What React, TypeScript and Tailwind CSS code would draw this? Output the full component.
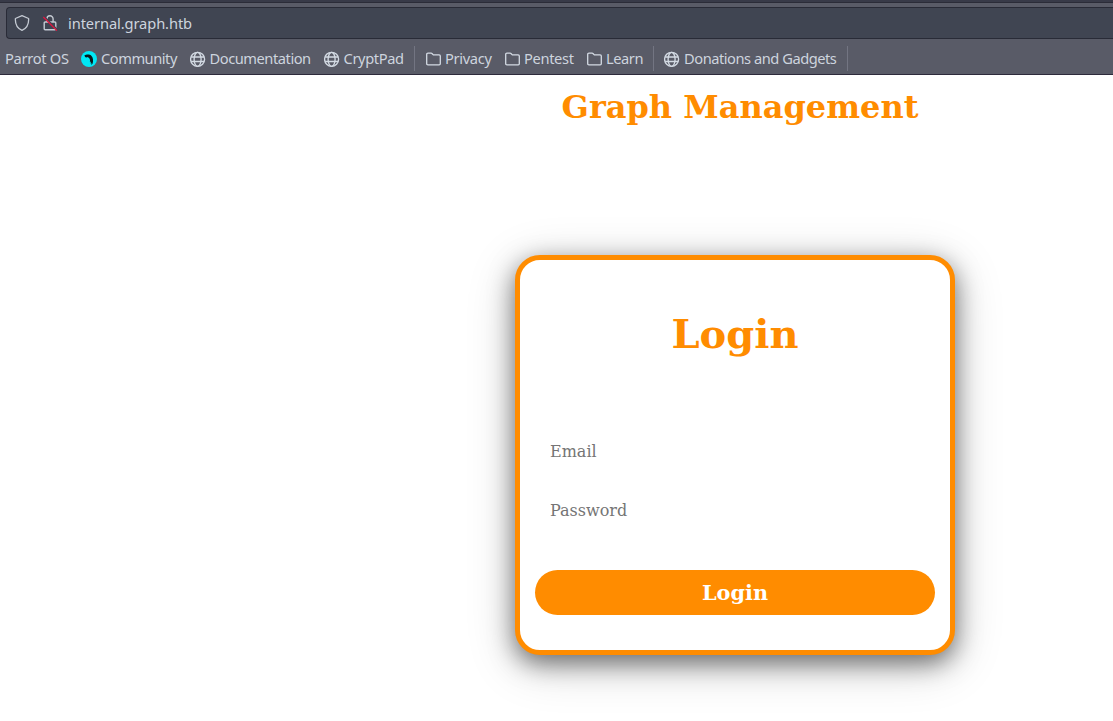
import type { ReactNode } from 'react';

function Globe() {
  return (
    <svg className="size-4 shrink-0" viewBox="0 0 16 16" fill="none" stroke="#d3dae3" strokeWidth="1.35">
      <circle cx="7.6" cy="8.3" r="7" />
      <ellipse cx="7.6" cy="8.3" rx="3.5" ry="7" />
      <path d="M1.1 6h13M1.1 10.5h13" />
    </svg>
  );
}

function Folder() {
  return (
    <svg className="size-4 shrink-0" viewBox="0 0 16 16" fill="none" stroke="#d3dae3" strokeWidth="1.3" strokeLinejoin="round">
      <path d="M2.9 2.2h3.2c.5 0 .8.2 1.1.5l1.1 1.2h5.9c.7 0 1.1.5 1.1 1.1v7.8c0 .7-.4 1.1-1.1 1.1H2.9c-.7 0-1.2-.4-1.2-1.1V3.3c0-.7.5-1.1 1.2-1.1z" />
    </svg>
  );
}

function ParrotLogo() {
  return (
    <svg className="size-4 shrink-0" viewBox="0 0 16 16">
      <circle cx="8" cy="8" r="8" fill="#00e8f5" />
      <path d="M3.4 4.6C5 3.5 8.4 3 10.3 4.7c1.9 1.7 2.2 5 1.3 7.9l-1.1 1.6v-2.1l-.8.6.1-2.2-.9.4c.4-2.2-.1-3.6-1.5-4.4L6 6.1l-.4.7-.7-.8-.5.5z" fill="#07191c" />
    </svg>
  );
}

function Bookmark({ icon, label, className }: { icon?: ReactNode; label: string; className: string }) {
  return (
    <a className={`flex h-6 shrink-0 items-center gap-1 whitespace-nowrap ${className}`}>
      {icon}
      <span className="pb-0.5">{label}</span>
    </a>
  );
}

function Divider() {
  return <span className="h-[25px] w-px shrink-0 bg-[#737582]" />;
}

export default function App() {
  return (
    <div className="flex h-[721px] w-full flex-col overflow-hidden bg-white">
      <header className="flex h-[75px] shrink-0 flex-col border-b border-[#2d2a3b] bg-[#595b67] font-['Noto_Sans',sans-serif] text-[14.67px] text-[#cdd4de]">
        <div className="h-[3px] shrink-0 border-b border-[#2b2c38] bg-[#383a48]" />
        <div className="mt-1 ml-1.5 flex h-8 shrink-0 items-center rounded-l border border-r-0 border-[#292b37] bg-[#404552] pl-[7px]">
          <svg className="size-4" viewBox="0 0 16 16" fill="none" stroke="#c4cad3" strokeWidth="1.3" strokeLinejoin="round">
            <path d="M8 .7 14.6 3.5c.3 4.9-1.6 9.6-6.6 11.8C3 13.1 1.1 8.4 1.4 3.5z" />
          </svg>
          <svg className="ml-3 size-4" viewBox="0 0 16 16" fill="none">
            <path d="M4.9 7V3.9a3.1 3.1 0 0 1 6.2 0V7m-8 0h9.8c.5 0 .9.4.9.9v5.9c0 .5-.4.9-.9.9H3.1c-.5 0-.9-.4-.9-.9V7.9c0-.5.4-.9.9-.9z" stroke="#c4cad3" strokeWidth="1.4" />
            <path d="M2.2 1.5 15.2 14.5" stroke="#404552" strokeWidth="1.5" />
            <path d="M1.3 2 14.9 15.6" stroke="#e2143f" strokeWidth="1.3" />
          </svg>
          <span className="ml-2.5 tracking-[-0.1px]">internal.graph.htb</span>
        </div>
        <nav className="mt-[7px] flex h-[25px] items-center pl-[5px]">
          <Bookmark label="Parrot OS" className="w-[76px] tracking-[-0.3px]" />
          <Bookmark icon={<ParrotLogo />} label="Community" className="w-[108.5px] tracking-[-0.48px]" />
          <Bookmark icon={<Globe />} label="Documentation" className="w-[134px] tracking-[-0.46px]" />
          <Bookmark icon={<Globe />} label="CryptPad" className="w-[90.5px] tracking-[-0.37px]" />
          <Divider />
          <span className="w-2.5" />
          <Bookmark icon={<Folder />} label="Privacy" className="w-[79px] tracking-[-0.32px]" />
          <Bookmark icon={<Folder />} label="Pentest" className="w-[82px] tracking-[-0.34px]" />
          <Bookmark icon={<Folder />} label="Learn" className="w-[67px] tracking-[-0.45px]" />
          <Divider />
          <span className="w-2.5" />
          <Bookmark icon={<Globe />} label="Donations and Gadgets" className="w-[183px] tracking-[-0.47px]" />
          <Divider />
        </nav>
      </header>
      <main className="flex flex-1 flex-col font-['DejaVu_Serif',serif]">
        <h1 className="mt-[13px] ml-[367px] text-center text-[32px] leading-[38px] font-bold text-[#ff8c00]">Graph Management</h1>
        <form className="mt-[129px] ml-[515px] flex h-[400px] w-[440px] shrink-0 flex-col rounded-[25px] border-5 border-[#ff8c00] bg-white px-[15px] shadow-[0_10px_50px_rgba(0,0,0,0.2),0_8px_24px_rgba(0,0,0,0.5)]">
          <h2 className="mt-[50px] text-center text-[40px] leading-[47px] font-bold text-[#ff8c00]">Login</h2>
          <input aria-label="Email" placeholder="Email" className="mt-[72px] h-[45px] rounded-full px-[15px] text-[16px] outline-none placeholder:text-[#757575]" />
          <input aria-label="Password" type="password" placeholder="Password" className="mt-3.5 h-[45px] rounded-full px-[15px] text-[16px] outline-none placeholder:text-[#757575]" />
          <button type="button" className="mt-[37px] h-[45px] rounded-full bg-[#ff8c00] text-[20.8px] font-bold text-white">Login</button>
        </form>
      </main>
    </div>
  );
}
